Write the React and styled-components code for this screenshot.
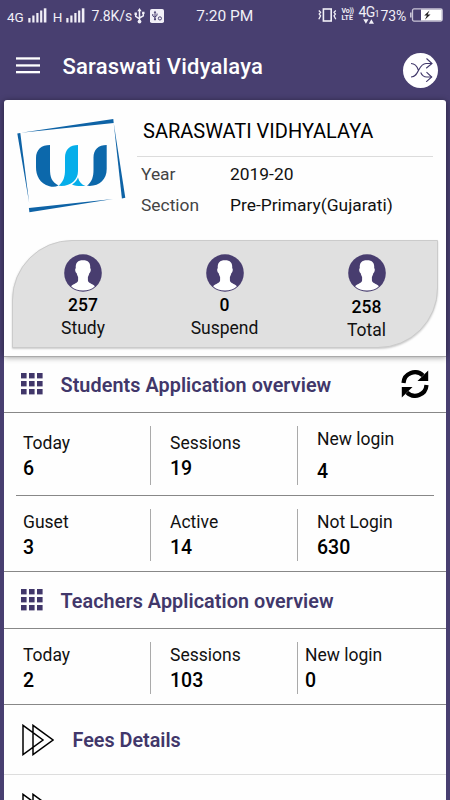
import React from "react";
import styled, { createGlobalStyle } from "styled-components";

const students = [
  [
    { label: "Today", value: "6" },
    { label: "Sessions", value: "19" },
    { label: "New login", value: "4", spaced: true },
  ],
  [
    { label: "Guset", value: "3" },
    { label: "Active", value: "14" },
    { label: "Not Login", value: "630" },
  ],
];

const teachers = [
  { label: "Today", value: "2" },
  { label: "Sessions", value: "103" },
  { label: "New login", value: "0", tight: true },
];

const Signal = () => (
  <svg width="19" height="15" viewBox="0 0 19 15" fill="#f1eff7">
    <rect x="0.3" y="10" width="2.2" height="4.5" />
    <rect x="4.3" y="7.5" width="2.2" height="7" />
    <rect x="8.3" y="5" width="2.2" height="9.5" />
    <rect x="12.1" y="2.5" width="2.2" height="12" />
    <rect x="15.8" y="0.3" width="2.6" height="14.2" />
  </svg>
);

const Usb = () => (
  <svg width="11" height="16" viewBox="0 0 11 16" fill="none" stroke="#f1eff7" strokeWidth="1.5">
    <path d="M5.5 2v12M1.7 6v2.4l3.8 2.4M9.3 5v2.8L5.5 10" />
    <path d="M5.5 0l2.2 3.2H3.3z M0.5 4.5h2.4v2.4H.5z M8.1 3.7h2.4v2.4H8.1z" fill="#f1eff7" stroke="none" />
    <circle cx="5.5" cy="13.6" r="1.9" fill="#f1eff7" stroke="none" />
  </svg>
);

const UsbBadge = () => (
  <svg width="14" height="14" viewBox="0 0 14 14">
    <rect width="14" height="14" rx="1.8" fill="#f1eff7" />
    <path d="M5 3v7M2.8 5v2L5 8.4M7 4.5v2L5 7.8" fill="none" stroke="#483f70" strokeWidth="1" />
    <path d="M5 1.8l1.3 2H3.7z" fill="#483f70" />
    <circle cx="5" cy="10.3" r="1.1" fill="#483f70" />
    <circle cx="9.9" cy="9.4" r="1.6" fill="none" stroke="#483f70" strokeWidth="1" />
  </svg>
);

const Vibrate = () => (
  <svg width="19" height="14" viewBox="0 0 19 14" fill="none" stroke="#f1eff7" strokeWidth="1.6">
    <rect x="5.4" y="1" width="7.8" height="12" />
    <path d="M.8 2.5l1.8 1.8-1.4 1.8 1.4 1.8L.8 11.3M17.8 2.5L16 4.3l1.4 1.8L16 7.9l1.8 3.4" strokeWidth="1.3" />
  </svg>
);

const Arrows = () => (
  <svg width="12" height="5" viewBox="0 0 12 5" fill="#f1eff7">
    <path d="M.3.3h5.2L2.9 4.700zM5.8 4.700H11L8.400.3z" />
  </svg>
);

const Battery = () => (
  <svg width="33" height="14" viewBox="0 0 33 14">
    <rect x="0" y="4.5" width="1.6" height="5" fill="#c9c5d6" />
    <rect x="2.5" y=".9" width="29.7" height="12.2" rx="1.5" fill="#483f70" stroke="#c9c5d6" strokeWidth="1.3" />
    <rect x="11" y="1.5" width="20.7" height="11" fill="#fff" />
    <path d="M19.5 2.5l-5.300 5h2.700l-2 4.200 5.600-5.200h-2.900z" fill="#222" />
  </svg>
);

const Bars = () => (
  <svg width="24" height="17" viewBox="0 0 24 17" fill="#fff">
    <rect y="0.3" width="24" height="2.3" />
    <rect y="7.3" width="24" height="2.3" />
    <rect y="14" width="24" height="2.3" />
  </svg>
);

const Shuffle = () => (
  <svg width="24" height="24" viewBox="0 0 24 24" fill="none" stroke="#41386a" strokeWidth="1.1">
    <path d="M2 5.500c4 0 6 2.500 7.300 6.500M2 19c8.500 0 7-13.500 15-13.500h6M11.700 14.500c1.300 3 2.800 4.500 6 4.500h5" />
    <path d="M17.500 0.500L23 5.500l-5.800 4.700M17.500 14.200L22.700 19l-5.500 4.800" />
  </svg>
);

const Logo = () => (
  <svg width="110" height="100" viewBox="0 0 110 100">
    <path d="M4 19.800L96.300 6l.4 4z" fill="#0e63a6" />
    <path d="M.3 20.500l3-.5 8.900 70z" fill="#0e63a6" />
    <path d="M96.700 10l11.600 74.800-3.400.6z" fill="#0e63a6" />
    <path d="M96 86L12.400 99.300l-.5-4.300z" fill="#0e63a6" />
    <path d="M33 32V56c0 8 1.500 13 8.500 16.500-3 1.500-6 1.500-9 .7C22.500 70.500 19 62.500 19 54V45c0-8.500 5.500-13 14-13z" fill="#0c68ab" />
    <path d="M61 32V58c0 9.500-8 16-19.500 14.800 5-4 6.500-9 6.500-16V44.500c0-8 5-12.500 13-12.500z" fill="#06aeea" />
    <path d="M61 64.500c1 4.500 3.500 7 7.500 8.400-5.500.4-10.500.2-13.500-1.500 3-1.800 5-4 6-6.900z" fill="#06aeea" />
    <path d="M89.700 32V56c0 11-8 18-19.700 16.800 5-4 6.500-9 6.500-16V44.500c0-8 5-12.500 13.200-12.500z" fill="#0c68ab" />
  </svg>
);

const Person = () => (
  <svg width="38" height="38" viewBox="0 0 38 38">
    <circle cx="19" cy="19" r="18.8" fill="#483d6f" />
    <path
      d="M19 6.300c5.200 0 7.700 2.500 7.200 8 1 .3.700 4-.8 4.800-.4 2-1 3-1.500 3.900v3.300c0 3 4.500 3.300 7 6C28 35.200 24 36.500 19 36.500S10 35.200 7.100 32.300c2.500-2.700 7-3 7-6V23c-.5-.9-1.100-1.900-1.500-3.900-1.500-.8-1.800-4.500-.8-4.800-.5-5.500 2-8 7.200-8z"
      fill="#fff"
    />
  </svg>
);

const Refresh = () => (
  <svg width="28" height="28" viewBox="0 0 28 28">
    <path d="M2.500 13A11.500 11.500 0 0 1 22 5.500M25.500 15A11.500 11.500 0 0 1 6 22.500" fill="none" stroke="#000" strokeWidth="4.2" />
    <path d="M27.200 .4V11H16.500zM.8 27.600V17h10.700z" fill="#000" />
  </svg>
);

const Dots = () => (
  <svg width="22" height="22" viewBox="0 0 22 22" fill="#41376a">
    {[0, 8, 16].map((y) =>
      [0, 8, 16].map((x) => <rect key={x + "-" + y} x={x} y={y} width="5.6" height="5.4" />)
    )}
  </svg>
);

const Forward = () => (
  <svg width="32" height="32" viewBox="0 0 32 32" fill="none" stroke="#000" strokeWidth="1.5">
    <path d="M1 1.300v29.300L21 16zM11 1.300v29.300L31 16z" />
  </svg>
);

const Cells = ({ items, tall }) => (
  <Row $tall={tall}>
    {items.map((item) => (
      <Cell key={item.label} $tight={item.tight}>
        <Label $spaced={item.spaced}>{item.label}</Label>
        <Value>{item.value}</Value>
      </Cell>
    ))}
  </Row>
);

export default function App() {
  return (
    <Screen>
      <GlobalStyle />
      <StatusBar>
        <StatusLeft>
          <Small>4G</Small>
          <Signal />
          <Small $left="6px">H</Small>
          <Signal />
          <Speed>7.8K/s</Speed>
          <Usb />
          <UsbBadge />
        </StatusLeft>
        <Clock>7:20 PM</Clock>
        <StatusRight>
          <Vibrate />
          <Volte>
            <span>Vo))</span>
            <span>LTE</span>
          </Volte>
          <Network>
            <span>
              4G<small>1</small>
            </span>
            <Arrows />
          </Network>
          <Percent>73%</Percent>
          <Battery />
        </StatusRight>
      </StatusBar>

      <AppBar>
        <Bars />
        <Title>Saraswati Vidyalaya</Title>
        <Round>
          <Shuffle />
        </Round>
      </AppBar>

      <Card>
        <School>
          <Logo />
          <Info>
            <SchoolName>SARASWATI VIDHYALAYA</SchoolName>
            <Field>
              <dt>Year</dt>
              <dd>2019-20</dd>
            </Field>
            <Field>
              <dt>Section</dt>
              <dd>Pre-Primary(Gujarati)</dd>
            </Field>
          </Info>
        </School>
        <Totals>
          <Total>
            <Person />
            <b>257</b>
            <span>Study</span>
          </Total>
          <Total>
            <Person />
            <b>0</b>
            <span>Suspend</span>
          </Total>
          <Total $low>
            <Person />
            <b>258</b>
            <span>Total</span>
          </Total>
        </Totals>
      </Card>

      <Content>
        <Heading $first>
          <Dots />
          <h2>Students Application overview</h2>
          <Refresh />
        </Heading>
        <Cells items={students[0]} tall />
        <Line />
        <Cells items={students[1]} />
        <Heading>
          <Dots />
          <h2>Teachers Application overview</h2>
        </Heading>
        <Cells items={teachers} />
        <Link>
          <Forward />
          <h2>Fees Details</h2>
        </Link>
        <Link>
          <Forward />
        </Link>
      </Content>
    </Screen>
  );
}

const GlobalStyle = createGlobalStyle`
  body {
    margin: 0;
    background: #483f70;
  }

  * {
    box-sizing: border-box;
  }
`;

const Screen = styled.div`
  width: 450px;
  height: 800px;
  overflow: hidden;
  background: #483f70;
  font-family: Roboto, "Liberation Sans", sans-serif;
  color: #111;
  display: flex;
  flex-direction: column;

  svg {
    flex: none;
    display: block;
  }
`;

const StatusBar = styled.div`
  height: 32px;
  flex: none;
  display: flex;
  color: #f1eff7;
  padding: 0 7px;
  white-space: nowrap;
`;

const StatusLeft = styled.div`
  width: 189.5px;
  display: flex;
  align-items: center;
  padding-bottom: 1px;

  svg:nth-of-type(3) {
    margin-left: 3px;
  }
  svg:nth-of-type(4) {
    margin-left: 5px;
  }
`;

const Small = styled.span`
  font-size: 13.5px;
  line-height: 14px;
  margin-left: ${(props) => props.$left || 0};
  margin-right: 4px;
  padding-top: 3px;
`;

const Speed = styled.span`
  width: 40px;
  font-size: 14px;
  letter-spacing: -0.1px;
  margin-left: 6px;
`;

const Clock = styled.div`
  font-size: 15.5px;
  line-height: 32px;
  width: 121.5px;
`;

const StatusRight = styled.div`
  display: flex;
  align-items: center;
  padding-bottom: 2px;
`;

const Volte = styled.div`
  display: flex;
  flex-direction: column;
  font-size: 7px;
  line-height: 7px;
  font-weight: 700;
  width: 15px;
  margin-left: 5px;

  span:first-child {
    letter-spacing: -0.3px;
  }
`;

const Network = styled.div`
  display: flex;
  flex-direction: column;
  font-size: 14px;
  line-height: 12px;
  letter-spacing: -0.8px;
  width: 22px;
  margin-left: 2px;

  small {
    font-size: 9px;
  }
  svg {
    margin: -1px 0 0 4px;
  }
`;

const Percent = styled.span`
  font-size: 14px;
  letter-spacing: -0.2px;
  padding-top: 2px;
  margin-right: 4px;
`;

const AppBar = styled.header`
  height: 68px;
  flex: none;
  display: flex;
  align-items: center;
  padding: 0 12px 0 16px;

  > svg {
    margin-bottom: 2px;
  }
`;

const Title = styled.h1`
  flex: 1;
  margin: 0 0 0 22.5px;
  font-size: 22px;
  letter-spacing: 0.2px;
  font-weight: 500;
  color: #fff;
`;

const Round = styled.div`
  width: 35px;
  height: 35px;
  margin-top: 8px;
  border-radius: 50%;
  background: #fff;
  display: flex;
  align-items: center;
  justify-content: center;
`;

const Card = styled.section`
  height: 256px;
  flex: none;
  margin: 0 4px;
  padding: 0 8px;
  background: #fefefe;
  border-radius: 3px 3px 0 0;
  position: relative;
  box-shadow: 0 1px 0 #aaa, 0 1px 6px rgba(0, 0, 0, 0.45);
`;

const School = styled.div`
  height: 140px;
  display: flex;
  padding: 13px 5px 0;
`;

const Info = styled.div`
  flex: 1;
  margin-left: 10px;
`;

const SchoolName = styled.div`
  height: 44px;
  line-height: 36px;
  padding-left: 6px;
  font-size: 20px;
  color: #000;
  border-bottom: 1px solid #dcdcdc;
  white-space: nowrap;
`;

const Field = styled.dl`
  margin: 0;
  padding: 0 0 1px 4px;
  height: 31px;
  display: flex;
  align-items: flex-end;
  font-size: 17.4px;
  line-height: 25px;

  dt {
    width: 89px;
    color: #444;
  }
  dd {
    margin: 0;
    color: #111;
  }
`;

const Totals = styled.div`
  height: 108px;
  padding: 13px 0 0;
  display: grid;
  grid-template-columns: 140px 143px 141px;
  background: #e0e0e0;
  border: 1px solid #cbcbcb;
  border-radius: 60px 0;
  box-shadow: 0 1px 2px rgba(0, 0, 0, 0.2);
`;

const Total = styled.div`
  display: flex;
  flex-direction: column;
  align-items: center;
  font-size: 17.5px;
  line-height: 23px;

  b {
    font-weight: 500;
    font-size: 17.5px;
    color: #000;
    margin-top: ${(props) => (props.$low ? "4px" : "2px")};
  }
`;

const Content = styled.main`
  flex: 1;
  margin: 0 4px;
  background: #fefefe;
`;

const Heading = styled.div`
  height: ${(props) => (props.$first ? "57px" : "58px")};
  border-top: ${(props) => (props.$first ? "none" : "1px solid #888")};
  border-bottom: 1px solid #888;
  padding: 0 17px;
  display: flex;
  align-items: center;

  h2 {
    flex: 1;
    margin: 2px 0 0 17.5px;
    font-size: 19.8px;
    font-weight: 600;
    letter-spacing: 0.07px;
    color: #41376a;
  }
`;

const Row = styled.div`
  height: ${(props) => (props.$tall ? "82px" : "75px")};
  padding: 13px 0 12px;
  display: grid;
  grid-template-columns: 147px 147px 1fr;
`;

const Cell = styled.div`
  padding: 1px 0 0 ${(props) => (props.$tight ? "7px" : "19px")};
  display: flex;
  flex-direction: column;
  justify-content: center;
  border-right: 1px solid #aaa;

  &:last-child {
    border-right: none;
  }
`;

const Label = styled.span`
  font-size: 17.5px;
  line-height: 25px;
  margin-bottom: ${(props) => (props.$spaced ? "7px" : 0)};
`;

const Value = styled.span`
  font-size: 19.5px;
  line-height: 26px;
  font-weight: 500;
  color: #000;
`;

const Line = styled.div`
  height: 1px;
  margin: 0 12px;
  background: #888;
`;

const Link = styled.div`
  height: 70px;
  border-top: 1px solid #888;
  padding: 0 18px;
  display: flex;
  align-items: center;

  & + & {
    border-top-color: #ddd;
    padding-bottom: 2px;
  }

  h2 {
    margin: 2px 0 0 18.5px;
    font-size: 19.8px;
    font-weight: 600;
    color: #41376a;
  }
`;
